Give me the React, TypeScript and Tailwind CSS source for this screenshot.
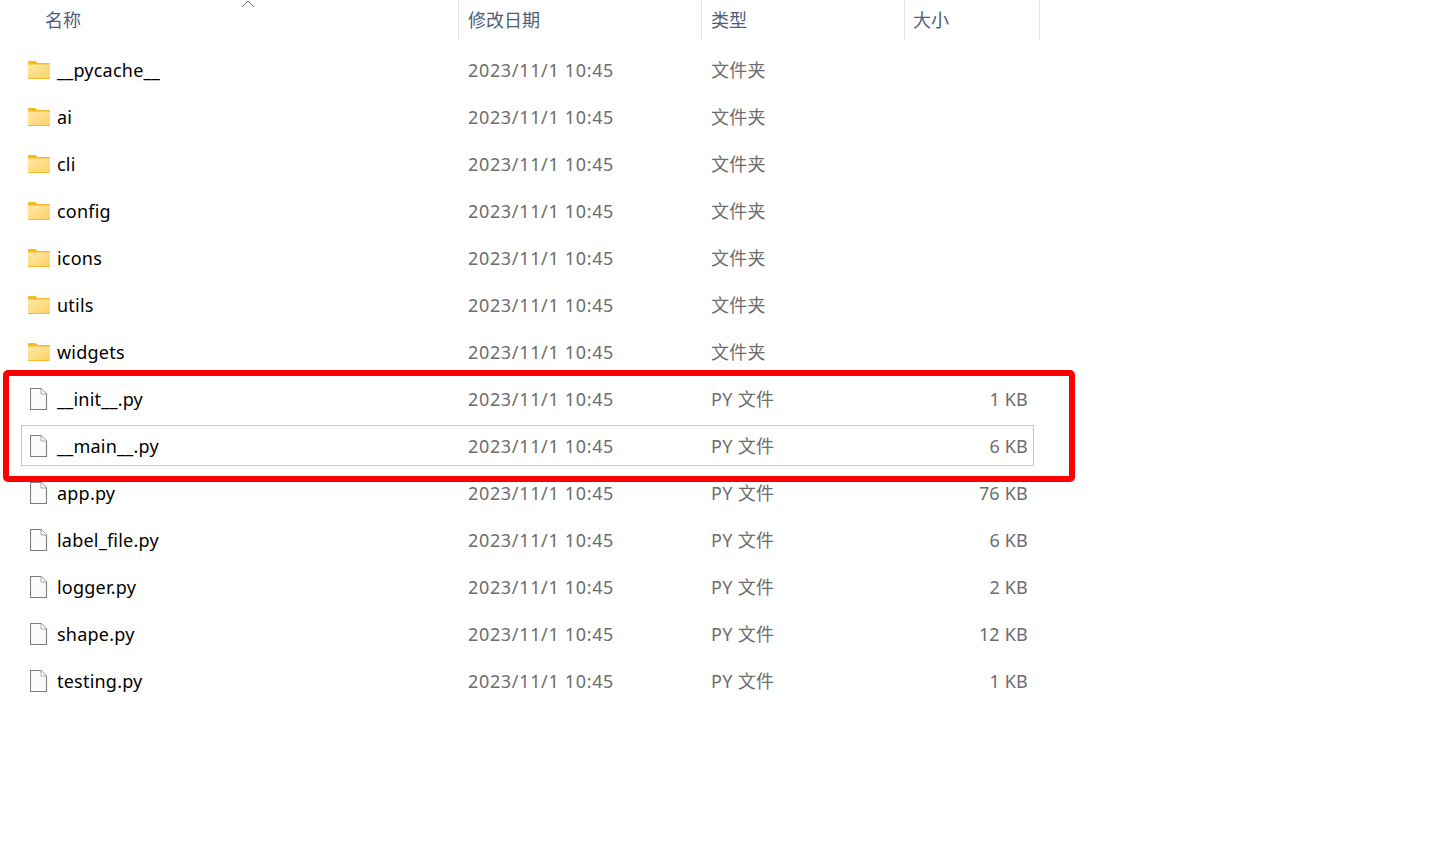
const folders = ['__pycache__', 'ai', 'cli', 'config', 'icons', 'utils', 'widgets']

const files = [
  { name: '__init__.py', size: '1 KB' },
  { name: '__main__.py', size: '6 KB', selected: true },
  { name: 'app.py', size: '76 KB' },
  { name: 'label_file.py', size: '6 KB' },
  { name: 'logger.py', size: '2 KB' },
  { name: 'shape.py', size: '12 KB' },
  { name: 'testing.py', size: '1 KB' },
]

function FolderIcon() {
  return (
    <svg width="22" height="18" viewBox="0 0 22 18">
      <defs>
        <linearGradient id="folderBody" x1="0" y1="0" x2="1" y2="1">
          <stop offset="0" stopColor="#ffe9a6" />
          <stop offset="1" stopColor="#fdd268" />
        </linearGradient>
      </defs>
      <path d="M0 1.5C0 .7.5 0 1.3 0h5.4c.6 0 1 .2 1.4.6L10 2.5H0z" fill="#f8bb14" />
      <rect x="0" y="2" width="22" height="16" rx="0.8" fill="#f5b92e" />
      <rect x="0" y="3.5" width="22" height="13.5" fill="url(#folderBody)" />
    </svg>
  )
}

function FileIcon() {
  return (
    <svg width="18" height="22" viewBox="0 0 18 22" fill="none">
      <path d="M.5.5h10.5L16.5 6v15.5H.5z" fill="#fbfbfb" stroke="#7d7d7d" strokeWidth="1.1" />
      <path d="M11 .5V6h5.5" fill="#fff" stroke="#a8a8a8" />
    </svg>
  )
}

function Row({ icon, name, type, size, selected }: { icon: React.ReactNode; name: string; type: string; size?: string; selected?: boolean }) {
  return (
    <div className={`grid h-[41px] grid-cols-[437px_243px_203px_130px] items-center border pt-[2px] ${selected ? 'border-[#a5d0f0]' : 'border-transparent'}`}>
      <div className="flex items-center text-black">
        <span className="mr-px flex w-[34px] -translate-y-px justify-center">{icon}</span>
        <span className="tracking-[0.22px]">{name}</span>
      </div>
      <div className="pl-[9px] tracking-[0.66px] text-[#6d6d6d]">2023/11/1 10:45</div>
      <div className="pl-[9px] tracking-[0.3px] text-[#6d6d6d]">{type}</div>
      <div className="pr-[7px] text-right tracking-[0.2px] text-[#6d6d6d]">{size}</div>
    </div>
  )
}

export default function App() {
  return (
    <div className="relative h-[853px] w-[1447px] overflow-hidden bg-white text-[18px] font-['Noto_Sans','Noto_Sans_CJK_SC',sans-serif]">
      <header className="relative grid h-10 w-[1040px] grid-cols-[459px_243px_203px_135px] items-center text-[#4c607a]">
        <div className="flex h-full items-center border-r border-[#e5e5e5] pl-[45px]">名称</div>
        <div className="flex h-full items-center border-r border-[#e5e5e5] pl-[9px]">修改日期</div>
        <div className="flex h-full items-center border-r border-[#e5e5e5] pl-[9px]">类型</div>
        <div className="flex h-full items-center border-r border-[#e5e5e5] pl-[8px]">大小</div>
        <svg className="absolute left-[241px] top-0" width="14" height="8" viewBox="0 0 14 8" fill="none">
          <path d="M1 7l6-6 6 6" stroke="#6f6f6f" />
        </svg>
      </header>

      <div className="ml-[21px] mt-[9px] flex w-[1013px] flex-col gap-[6px]">
        {folders.map(f => (
          <Row key={f} icon={<FolderIcon />} name={f} type="文件夹" />
        ))}
        {files.map(f => (
          <Row key={f.name} icon={<FileIcon />} name={f.name} type="PY 文件" size={f.size} selected={f.selected} />
        ))}
      </div>

      {/* red highlight drawn over the two files */}
      <div className="absolute left-[3px] top-[370px] h-[112px] w-[1072px] rounded-[5px] border-[6px] border-[#ff0000]" />
    </div>
  )
}
